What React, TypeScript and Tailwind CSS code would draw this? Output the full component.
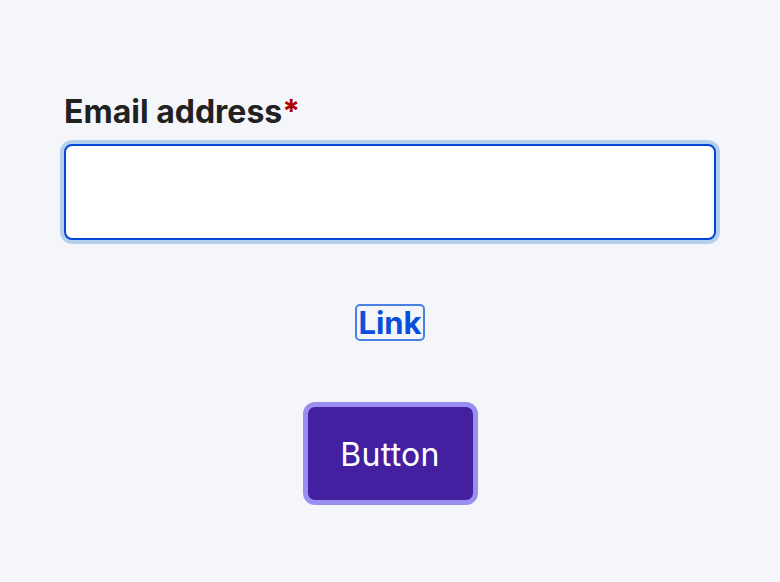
export default function App() {
  return (
    <div
      className="flex min-h-[582px] w-full flex-col bg-[#f5f6fa] px-[64px] pt-[92px] text-[#212121]"
      style={{ fontFamily: "Inter, 'Noto Sans', sans-serif" }}
    >
      <label htmlFor="email" className="text-[32px] font-bold leading-[40px]">
        Email address<span className="text-[#b00000]">*</span>
      </label>
      <input
        id="email"
        type="email"
        className="mt-[12px] h-[96px] w-full rounded-[8px] border-2 border-[#0047d8] bg-white px-4 text-[24px] outline-none ring-4 ring-[#b3d1ee]"
      />

      <div className="mt-[64px] flex justify-center">
        <a
          href="#"
          className="rounded-[5px] border-2 border-[#4a80e6] px-[1px] text-[31px] font-bold leading-[33px] text-[#0a4fd9]"
        >
          Link
        </a>
      </div>

      <div className="mt-[61px] flex justify-center">
        <button
          type="button"
          className="h-[103px] w-[175px] rounded-[12px] border-[5px] border-[#9a8ef0] bg-[#43209f] pt-[3px] text-[32px] tracking-[0.3px] text-white"
        >
          Button
        </button>
      </div>
    </div>
  );
}
